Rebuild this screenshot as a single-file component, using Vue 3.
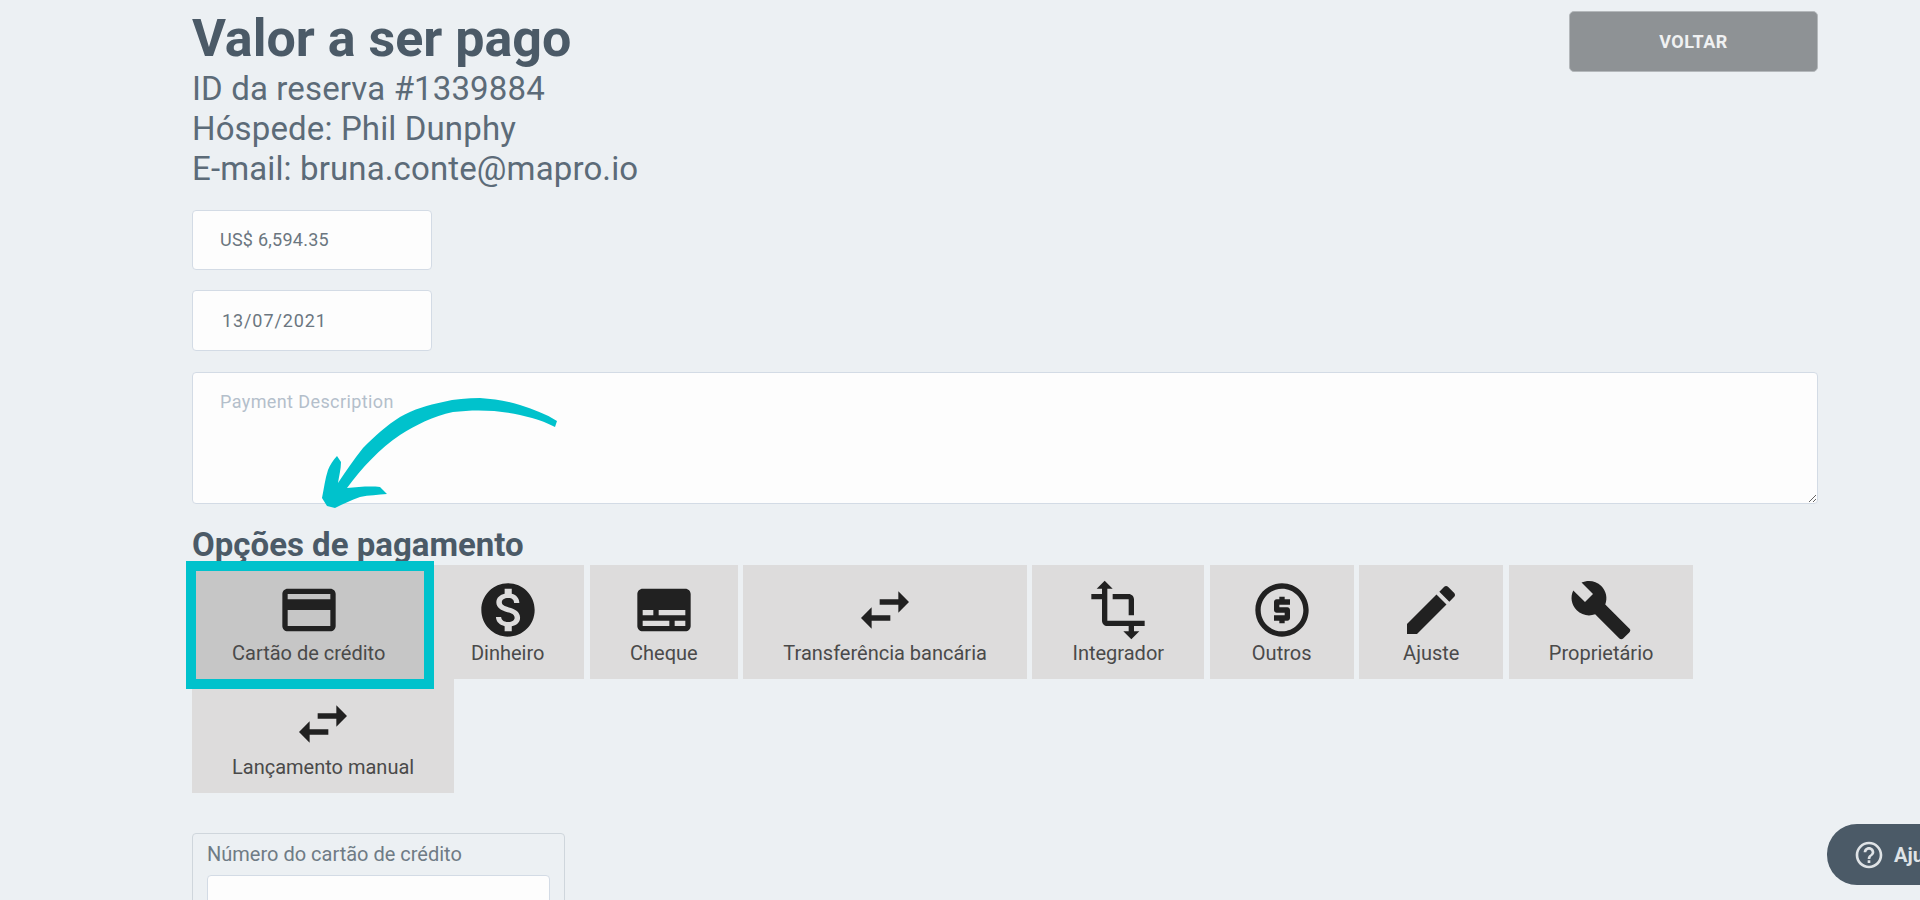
<template>
  <div class="page">
    <header class="top">
      <div>
        <h1>Valor a ser pago</h1>
        <p>ID da reserva #1339884</p>
        <p>Hóspede: Phil Dunphy</p>
        <p>E-mail: bruna.conte@mapro.io</p>
      </div>
      <button class="back">VOLTAR</button>
    </header>

    <input class="field amount" type="text" value="US$ 6,594.35" />
    <input class="field date" type="text" value="13/07/2021" />
    <textarea class="desc" placeholder="Payment Description"></textarea>

    <h2>Opções de pagamento</h2>
    <div class="options">
      <button
        v-for="opt in options"
        :key="opt.label"
        class="option"
        :class="{ selected: opt.selected }"
      >
        <svg viewBox="0 0 24 24" width="64" height="64"><path :d="opt.icon" /></svg>
        <span>{{ opt.label }}</span>
      </button>
    </div>

    <div class="card-box">
      <label>Número do cartão de crédito</label>
      <input type="text" />
    </div>

    <!-- tutorial annotations -->
    <div class="frame"></div>
    <svg class="arrow" viewBox="0 0 280 140" width="280" height="140">
      <path d="M257 41 L255 47 C247 43 240 40 232 38 C205 30 178 29 153 32 C133 36 116 45 100 55 C80 68 62 88 47 108 C58 107 70 106 80 107 L87 114 C78 115 69 115 60 117 C51 120 43 124 35 128 L27 126 L22 118 C24 108 25 99 28 90 C30 85 33 80 37 76 L41 82 C41 89 39 96 38 103 C46 91 54 79 63 68 C75 56 87 45 100 37 C114 29 128 25 143 22 C155 19 167 18 180 18 C194 19 207 21 220 25 C233 29 246 34 257 41 Z" />
    </svg>

    <button class="help">
      <svg viewBox="0 0 24 24" width="32" height="32"><path d="M11 18h2v-2h-2v2zm1-16C6.48 2 2 6.48 2 12s4.48 10 10 10 10-4.48 10-10S17.52 2 12 2zm0 18c-4.41 0-8-3.59-8-8s3.59-8 8-8 8 3.59 8 8-3.59 8-8 8zm0-14c-2.21 0-4 1.79-4 4h2c0-1.1.9-2 2-2s2 .9 2 2c0 2-3 1.75-3 5h2c0-2.25 3-2.5 3-5 0-2.21-1.79-4-4-4z" /></svg>
      <span>Ajuda</span>
    </button>
  </div>
</template>

<script setup>
const swap = 'M6.99 11L3 15l3.99 4v-3H14v-2H6.99v-3zM21 9l-4-4v3h-7v2h7v3l4-4z'

const options = [
  {
    label: 'Cartão de crédito',
    selected: true,
    icon: 'M20 4H4c-1.11 0-1.99.89-1.99 2L2 18c0 1.11.89 2 2 2h16c1.11 0 2-.89 2-2V6c0-1.11-.89-2-2-2zm0 14H4v-6h16v6zm0-10H4V6h16v2z'
  },
  {
    label: 'Dinheiro',
    icon: 'M12 2C6.48 2 2 6.48 2 12s4.48 10 10 10 10-4.48 10-10S17.52 2 12 2zm1.41 16.09V20h-2.67v-1.93c-1.71-.36-3.16-1.46-3.27-3.4h1.96c.1 1.05.82 1.87 2.65 1.87 1.96 0 2.4-.98 2.4-1.59 0-.83-.44-1.61-2.67-2.14-2.48-.6-4.18-1.62-4.18-3.67 0-1.72 1.39-2.84 3.11-3.21V4h2.67v1.95c1.86.45 2.79 1.86 2.85 3.39H14.3c-.05-1.11-.64-1.87-2.22-1.87-1.5 0-2.4.68-2.4 1.64 0 .84.65 1.39 2.67 1.91s4.18 1.39 4.18 3.91c-.01 1.83-1.38 2.83-3.12 3.16z'
  },
  {
    label: 'Cheque',
    icon: 'M20 4H4c-1.1 0-2 .9-2 2v12c0 1.1.9 2 2 2h16c1.1 0 2-.9 2-2V6c0-1.1-.9-2-2-2zM4 12h4v2H4v-2zm10 6H4v-2h10v2zm6 0h-4v-2h4v2zm0-4H10v-2h10v2z'
  },
  { label: 'Transferência bancária', icon: swap },
  {
    label: 'Integrador',
    icon: 'M22 18v-2H8V4h2L7 1 4 4h2v2H2v2h4v8c0 1.1.9 2 2 2h8v2h-2l3 3 3-3h-2v-2h4zM10 8h6v6h2V8c0-1.1-.9-2-2-2h-6v2z'
  },
  {
    label: 'Outros',
    icon: 'M12 2C6.48 2 2 6.48 2 12s4.48 10 10 10 10-4.48 10-10S17.52 2 12 2zm0 18c-4.41 0-8-3.59-8-8s3.59-8 8-8 8 3.59 8 8-3.59 8-8 8zM11 17h2v-1h1c.55 0 1-.45 1-1v-3c0-.55-.45-1-1-1h-3v-1h4V8h-2V7h-2v1h-1c-.55 0-1 .45-1 1v3c0 .55.45 1 1 1h3v1H9v2h2v1z'
  },
  {
    label: 'Ajuste',
    icon: 'M3 17.25V21h3.75L17.81 9.94l-3.75-3.75L3 17.25zM20.71 7.04c.39-.39.39-1.02 0-1.41l-2.34-2.34c-.39-.39-1.02-.39-1.41 0l-1.83 1.83 3.75 3.75 1.83-1.83z'
  },
  {
    label: 'Proprietário',
    icon: 'M22.7 19l-9.1-9.1c.9-2.3.4-5-1.5-6.9-2-2-5-2.4-7.4-1.3L9 6 6 9 1.6 4.7C.4 7.1.9 10.1 2.9 12.1c1.9 1.9 4.6 2.4 6.9 1.5l9.1 9.1c.4.4 1 .4 1.4 0l2.3-2.3c.5-.4.5-1.1.1-1.4z'
  },
  { label: 'Lançamento manual', icon: swap }
]
</script>

<style>
html,
body {
  margin: 0;
  height: 900px;
  overflow: hidden;
  background: #ecf0f3;
}
</style>

<style scoped>
.page {
  position: relative;
  box-sizing: border-box;
  height: 900px;
  padding: 9px 102px 0 192px;
  overflow: hidden;
  font-family: Roboto, sans-serif;
  color: #4b5a67;
}

.top {
  display: flex;
  justify-content: space-between;
  align-items: flex-start;
  margin-bottom: 21px;
}

h1 {
  margin: 0;
  font-size: 52px;
  line-height: 60px;
  font-weight: 700;
}

.top p {
  margin: 0;
  font-size: 33px;
  line-height: 40px;
  font-weight: 400;
  letter-spacing: 0.13px;
  color: #5c6b78;
}

.back {
  width: 249px;
  height: 61px;
  margin-top: 2px;
  background: #8e9295;
  border: 1px solid #b4b8bb;
  border-radius: 5px;
  color: #f0f1f2;
  font: 700 18px Roboto, sans-serif;
  letter-spacing: 0.5px;
}

.field {
  display: block;
  box-sizing: border-box;
  width: 240px;
  background: #fdfdfd;
  border: 1px solid #d3dbe5;
  border-radius: 4px;
  font: 400 18px Roboto, sans-serif;
  color: #6b7680;
  outline: none;
}

.amount {
  height: 60px;
  padding: 0 0 2px 27px;
  margin-bottom: 20px;
  letter-spacing: 0.25px;
}

.date {
  height: 61px;
  padding: 0 0 0 29px;
  margin-bottom: 21px;
  letter-spacing: 0.9px;
}

.desc {
  display: block;
  box-sizing: border-box;
  width: 100%;
  height: 132px;
  padding: 18px 27px;
  background: #fdfdfd;
  border: 1px solid #d3dbe5;
  border-radius: 4px;
  font: 400 18px Roboto, sans-serif;
  letter-spacing: 0.4px;
  outline: none;
}

.desc::placeholder {
  color: #b4bfcb;
}

h2 {
  margin: 23px 0 3px;
  font-size: 33px;
  line-height: 35px;
  font-weight: 700;
  color: #4b5a67;
}

.options {
  display: flex;
  flex-wrap: wrap;
  column-gap: 5.6px;
  width: 1510px;
}

.option {
  display: flex;
  flex-direction: column;
  align-items: center;
  box-sizing: border-box;
  min-width: 143px;
  height: 114px;
  padding: 13px 40px 0;
  background: #dddcdc;
  border: 0;
  font: 400 20px Roboto, sans-serif;
  color: #4a4a4a;
  white-space: nowrap;
}

.option svg {
  fill: #212121;
  flex: none;
}

.option span {
  margin-top: -1px;
  line-height: 24px;
}

.option.selected {
  background: #c6c6c6;
}

.card-box {
  box-sizing: border-box;
  width: 373px;
  margin-top: 40px;
  padding: 8px 14px;
  border: 1px solid #cfd6dc;
  border-radius: 4px;
}

.card-box label {
  display: block;
  font-size: 20px;
  line-height: 24px;
  color: #6f7b85;
  margin-bottom: 9px;
}

.card-box input {
  display: block;
  box-sizing: border-box;
  width: 343px;
  height: 60px;
  background: #fdfdfd;
  border: 1px solid #d3dbe5;
  border-radius: 4px;
  outline: none;
}

.frame {
  position: absolute;
  left: 186px;
  top: 561px;
  width: 248px;
  height: 128px;
  box-sizing: border-box;
  border: 10.5px solid #00c2cc;
}

.arrow {
  position: absolute;
  left: 300px;
  top: 380px;
  fill: #00c2cc;
}

.help {
  position: absolute;
  left: 1827px;
  top: 824px;
  width: 200px;
  height: 61px;
  display: flex;
  align-items: center;
  gap: 9px;
  padding: 0 0 0 26px;
  background: #4b5a67;
  border: 0;
  border-radius: 30px;
  color: #dfe3e6;
  font: 700 20px Roboto, sans-serif;
}

.help svg {
  fill: #dfe3e6;
  flex: none;
}
</style>
